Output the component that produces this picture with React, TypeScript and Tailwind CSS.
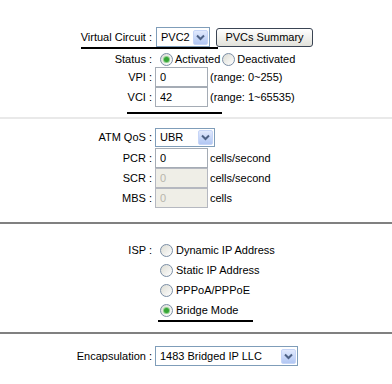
import React from 'react';

const Chevron = () => (
  <svg width="9" height="7" viewBox="0 0 9 7">
    <path d="M1 1.5 L4.5 5 L8 1.5" fill="none" stroke="#4d6185" strokeWidth="2" />
  </svg>
);

const Select: React.FC<{ value: string; className: string }> = ({ value, className }) => (
  <div className={`flex items-center border border-[#7f9db9] bg-white ${className}`}>
    <span className="pl-[4px] leading-none">{value}</span>
    <div className="ml-auto mr-[1px] flex h-[15px] w-[15px] items-center justify-center rounded-[2px] border border-[#c6d5f7] bg-linear-to-b from-[#e1e9fd] to-[#b2c7f3]">
      <Chevron />
    </div>
  </div>
);

const Radio: React.FC<{ checked?: boolean }> = ({ checked }) => (
  <span className="inline-flex h-[13px] w-[13px] shrink-0 items-center justify-center rounded-full border border-[#7b8ea5] bg-linear-to-br from-[#dcdcd4] to-white">
    {checked && <span className="h-[5px] w-[5px] rounded-full bg-[#35a535] ring-1 ring-[#8fd08f]" />}
  </span>
);

const Field: React.FC<{ value: string; disabled?: boolean }> = ({ value, disabled }) => (
  <input
    readOnly
    value={value}
    disabled={disabled}
    className={
      disabled
        ? 'h-[20px] w-[53px] border border-[#b5b8c0] bg-[#efeee7] px-[4px] text-[11px] text-[#b8b6ad] outline-none'
        : 'h-[20px] w-[53px] border border-[#a5acb5] bg-white px-[4px] text-[11px] text-black outline-none'
    }
  />
);

const Row: React.FC<{ label?: string; className?: string; children: React.ReactNode }> = ({
  label,
  className = 'h-[20px]',
  children,
}) => (
  <div className={`grid grid-cols-[155px_1fr] items-center ${className}`}>
    <div className="pr-[3px] text-right">{label}</div>
    <div className="flex items-center">{children}</div>
  </div>
);

export default function App() {
  return (
    <div className="h-[384px] w-[392px] overflow-hidden bg-white text-[11px] text-black font-['Liberation_Sans',Arial,sans-serif]">
      {/* PVC */}
      <div className="pt-[27px]">
        <Row label="Virtual Circuit :">
          <Select value="PVC2" className="ml-[1px] h-[20px] w-[54px]" />
          <button className="ml-[6px] h-[19px] w-[97px] rounded-[3px] border border-[#3a4453] bg-linear-to-b from-white to-[#e2e2db] text-[11px]">
            PVCs Summary
          </button>
        </Row>
        <div className="ml-[81px] h-[2px] w-[137px] bg-black" />
        <Row label="Status :" className="h-[18px] pt-[2px]">
          <span className="ml-[5px] flex items-center">
            <Radio checked />
            <span className="ml-[2px]">Activated</span>
          </span>
          <span className="ml-[2px] flex items-center">
            <Radio />
            <span className="ml-[2px]">Deactivated</span>
          </span>
        </Row>
        <Row label="VPI :">
          <Field value="0" />
          <span className="ml-[2px]">(range: 0~255)</span>
        </Row>
        <Row label="VCI :">
          <Field value="42" />
          <span className="ml-[2px]">(range: 1~65535)</span>
        </Row>
        <div className="ml-[127px] mt-[5px] h-[2px] w-[95px] bg-black" />
      </div>
      <div className="mt-[3px] h-[2px] bg-[#e9e9e9]" />

      {/* QoS */}
      <div className="pt-[9px]">
        <Row label="ATM QoS :" className="h-[19px]">
          <Select value="UBR" className="h-[19px] w-[60px]" />
        </Row>
        <div className="mt-[1px]">
          <Row label="PCR :">
            <Field value="0" />
            <span className="ml-[2px]">cells/second</span>
          </Row>
          <Row label="SCR :">
            <Field value="0" disabled />
            <span className="ml-[2px]">cells/second</span>
          </Row>
          <Row label="MBS :">
            <Field value="0" disabled />
            <span className="ml-[2px]">cells</span>
          </Row>
        </div>
      </div>
      <div className="mt-[14px] h-[2px] bg-[#808080]" />

      {/* ISP */}
      <div className="pt-[16px]">
        {['Dynamic IP Address', 'Static IP Address', 'PPPoA/PPPoE', 'Bridge Mode'].map((opt, i) => (
          <Row key={opt} label={i === 0 ? 'ISP :' : ''}>
            <span className="ml-[5px] flex items-center">
              <Radio checked={opt === 'Bridge Mode'} />
              <span className="ml-[3px]">{opt}</span>
            </span>
          </Row>
        ))}
        <div className="ml-[158px] h-[2px] w-[95px] bg-black" />
      </div>
      <div className="mt-[10px] h-[2px] bg-[#808080]" />

      {/* Encapsulation */}
      <div className="pt-[12px]">
        <Row label="Encapsulation :">
          <Select value="1483 Bridged IP LLC" className="h-[20px] w-[143px]" />
        </Row>
      </div>
    </div>
  );
}
